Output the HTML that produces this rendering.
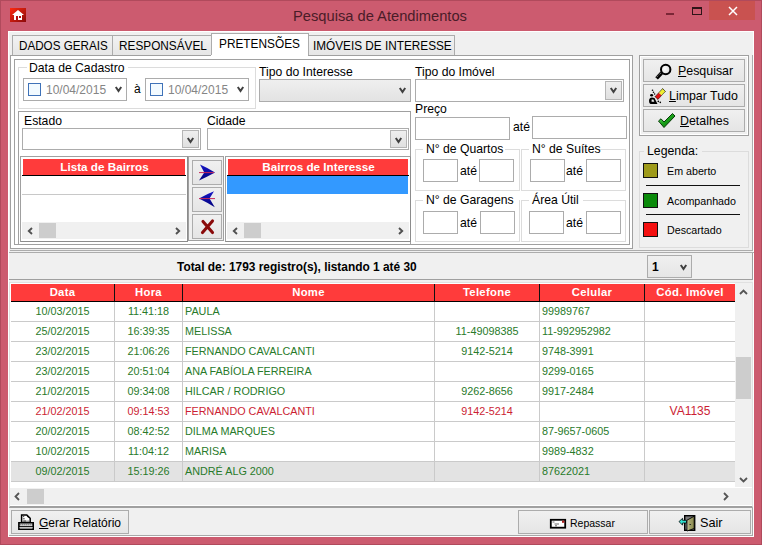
<!DOCTYPE html><html><head><meta charset="utf-8"><style>
*{margin:0;padding:0;box-sizing:border-box}
html,body{width:762px;height:545px;overflow:hidden}
body{position:relative;background:#CC5B6F;font-family:"Liberation Sans",sans-serif;font-size:12px;color:#000}
div,span,svg{position:absolute}
.t{white-space:nowrap;line-height:14px}
.edit{background:#fff;border:1px solid #ABADB3}
.btn{background:linear-gradient(#F0F0F0,#E5E5E5);border:1px solid #ACACAC}
.dd{background:linear-gradient(#F0F0F0,#E5E5E5);border:1px solid #ACACAC}
</style></head><body>
<div style="left:0px;top:0px;width:762px;height:545px;border:1px solid #B04A5C"></div>
<svg style="left:10px;top:8px" width="16" height="14" viewBox="0 0 16 14"><defs><linearGradient id="ig" x1="0" y1="0" x2="1" y2="1"><stop offset="0" stop-color="#FF2A10"/><stop offset="1" stop-color="#8A0A0A"/></linearGradient></defs><rect width="16" height="14" fill="url(#ig)"/><path d="M8 2 L14 7 L12 7 L12 12 L4 12 L4 7 L2 7 Z" fill="#fff"/><rect x="6" y="8" width="2" height="4" fill="#B01010"/><rect x="9" y="8" width="2" height="2" fill="#B01010"/></svg>
<div class="t" style="left:293px;top:7.5px;font-size:14.7px;color:#4A1C28;line-height:16px">Pesquisa de Atendimentos</div>
<div style="left:666px;top:13px;width:8px;height:2px;background:#7A2636"></div>
<div style="left:692px;top:7px;width:10px;height:8px;border:1px solid #2E1418;border-top-width:2px"></div>
<div style="left:709px;top:1px;width:46px;height:19px;background:#C95250"></div>
<svg style="left:728px;top:6px" width="10" height="10" viewBox="0 0 10 10"><path d="M1 1 L9 9 M9 1 L1 9" stroke="#fff" stroke-width="1.5"/></svg>
<div style="left:8px;top:31px;width:746px;height:506px;background:#F0F0F0;border:1px solid #fff"></div>
<div style="left:9px;top:508px;width:744px;height:28px;border-right:1px solid #A8A8A8;border-bottom:1px solid #A8A8A8"></div>
<div style="left:12px;top:35px;width:101px;height:21px;background:linear-gradient(#F2F2F2,#E6E6E6);border:1px solid #ACACAC"></div>
<div class="t" style="left:18.6px;top:38.5px;font-size:12.8px;transform:scaleX(0.91);transform-origin:0 0">DADOS GERAIS</div>
<div style="left:112px;top:35px;width:100px;height:21px;background:linear-gradient(#F2F2F2,#E6E6E6);border:1px solid #ACACAC"></div>
<div class="t" style="left:119px;top:38.5px;font-size:12.8px;transform:scaleX(0.922);transform-origin:0 0">RESPONSÁVEL</div>
<div style="left:308px;top:35px;width:147px;height:21px;background:linear-gradient(#F2F2F2,#E6E6E6);border:1px solid #ACACAC"></div>
<div class="t" style="left:313px;top:38.5px;font-size:12.8px;transform:scaleX(0.92);transform-origin:0 0">IMÓVEIS DE INTERESSE</div>
<div style="left:10px;top:250px;width:743px;height:1px;background:#ACACAC"></div>
<div style="left:752px;top:55px;width:1px;height:196px;background:#ACACAC"></div>
<div style="left:9px;top:252px;width:745px;height:1px;background:#ACACAC"></div>
<div style="left:211px;top:33px;width:98px;height:23px;background:#fff;border:1px solid #ACACAC;border-bottom:none"></div>
<div class="t" style="left:219px;top:36.5px;font-size:12.8px;transform:scaleX(0.926);transform-origin:0 0">PRETENSÕES</div>
<div style="left:10px;top:55px;width:623px;height:194px;background:#fff;border:1px solid #A0A0A0"></div>
<div style="left:211px;top:55px;width:97px;height:1px;background:#fff"></div>
<div style="left:14px;top:59px;width:616px;height:186px;background:#fff;border:1px solid #A0A0A0"></div>
<div style="left:18px;top:67px;width:238px;height:42px;border:1px solid #DCDCDC;border-right-color:#DCDCDC"></div>
<div style="left:27px;top:62px;width:101px;height:12px;background:#fff"></div>
<div class="t" style="left:29px;top:61px;font-size:12.2px">Data de Cadastro</div>
<div style="left:23px;top:78px;width:104px;height:23px;background:#fff;border:1px solid #ACACAC"></div>
<div style="left:28px;top:83px;width:13px;height:13px;background:#F2FAFF;border:1px solid #3F72B8"></div>
<div class="t" style="left:46px;top:83px;color:#858585;font-size:12px">10/04/2015</div>
<svg style="left:114px;top:86px" width="9" height="8" viewBox="0 0 9 8"><path d="M1.8 1 L4.5 5 L7.2 1" fill="none" stroke="#404040" stroke-width="2"/></svg>
<div style="left:145px;top:78px;width:104px;height:23px;background:#fff;border:1px solid #ACACAC"></div>
<div style="left:150px;top:83px;width:13px;height:13px;background:#F2FAFF;border:1px solid #3F72B8"></div>
<div class="t" style="left:168px;top:83px;color:#858585;font-size:12px">10/04/2015</div>
<svg style="left:236px;top:86px" width="9" height="8" viewBox="0 0 9 8"><path d="M1.8 1 L4.5 5 L7.2 1" fill="none" stroke="#404040" stroke-width="2"/></svg>
<div class="t" style="left:134px;top:82px;font-size:12px">à</div>
<div class="t" style="left:259px;top:65px;font-size:12.2px">Tipo do Interesse</div>
<div style="left:259px;top:79px;width:152px;height:23px;background:linear-gradient(#EFEFEF,#E3E3E3);border:1px solid #ACACAC"></div>
<svg style="left:398px;top:87px" width="9" height="8" viewBox="0 0 9 8"><path d="M1.8 1 L4.5 5 L7.2 1" fill="none" stroke="#404040" stroke-width="2"/></svg>
<div class="t" style="left:415px;top:65px;font-size:12.2px">Tipo do Imóvel</div>
<div style="left:415px;top:79px;width:209px;height:23px;background:#fff;border:1px solid #ACACAC"></div>
<div style="left:605px;top:81px;width:17px;height:19px;background:linear-gradient(#EFEFEF,#E0E0E0);border:1px solid #B5B5B5"></div>
<svg style="left:609px;top:87px" width="9" height="8" viewBox="0 0 9 8"><path d="M1.8 1 L4.5 5 L7.2 1" fill="none" stroke="#404040" stroke-width="2"/></svg>
<div class="t" style="left:415px;top:102px;font-size:12.2px">Preço</div>
<div style="left:415px;top:117px;width:95px;height:23px;background:#fff;border:1px solid #ACACAC"></div>
<div class="t" style="left:513px;top:120px;font-size:12.2px">até</div>
<div style="left:532px;top:116px;width:95px;height:23px;background:#fff;border:1px solid #ACACAC"></div>
<div style="left:18px;top:111px;width:393px;height:134px;border:1px solid #A0A0A0"></div>
<div class="t" style="left:24px;top:114px;font-size:12.2px">Estado</div>
<div style="left:22px;top:128px;width:179px;height:22px;background:#fff;border:1px solid #ACACAC"></div>
<div style="left:182px;top:130px;width:17px;height:18px;background:linear-gradient(#EFEFEF,#E0E0E0);border:1px solid #B5B5B5"></div>
<svg style="left:186px;top:136.5px" width="9" height="8" viewBox="0 0 9 8"><path d="M1.8 1 L4.5 5 L7.2 1" fill="none" stroke="#404040" stroke-width="2"/></svg>
<div class="t" style="left:207px;top:114px;font-size:12.2px">Cidade</div>
<div style="left:207px;top:128px;width:202px;height:22px;background:#fff;border:1px solid #ACACAC"></div>
<div style="left:390px;top:130px;width:17px;height:18px;background:linear-gradient(#EFEFEF,#E0E0E0);border:1px solid #B5B5B5"></div>
<svg style="left:394px;top:136.5px" width="9" height="8" viewBox="0 0 9 8"><path d="M1.8 1 L4.5 5 L7.2 1" fill="none" stroke="#404040" stroke-width="2"/></svg>
<div style="left:20px;top:156px;width:168px;height:86px;background:#fff;border:1px solid #A0A0A0;border-right-color:#8C8C8C;border-bottom-color:#8C8C8C"></div>
<div style="left:23px;top:159px;width:162px;height:16px;background:#FF3B3B"></div>
<div style="left:22px;top:175px;width:164px;height:1px;background:#000"></div>
<div class="t" style="left:23px;top:159px;width:163px;text-align:center;color:#fff;font-weight:bold;font-size:11.7px;line-height:15px">Lista de Bairros</div>
<div style="left:22px;top:194px;width:164px;height:1px;background:#C8C8C8"></div>
<div style="left:22px;top:222px;width:164px;height:17px;background:#F0F0F0"></div>
<div style="left:39px;top:223px;width:17px;height:15px;background:#CDCDCD"></div>
<svg style="left:27px;top:226.5px" width="6" height="8" viewBox="0 0 6 8"><path d="M5 1 L1.8 4 L5 7" fill="none" stroke="#505050" stroke-width="1.9"/></svg>
<svg style="left:175px;top:226.5px" width="6" height="8" viewBox="0 0 6 8"><path d="M1 1 L4.2 4 L1 7" fill="none" stroke="#505050" stroke-width="1.9"/></svg>
<div style="left:225px;top:156px;width:186px;height:86px;background:#fff;border:1px solid #A0A0A0;border-right-color:#8C8C8C;border-bottom-color:#8C8C8C"></div>
<div style="left:228px;top:159px;width:180px;height:16px;background:#FF3B3B"></div>
<div style="left:227px;top:175px;width:182px;height:1px;background:#000"></div>
<div class="t" style="left:228px;top:159px;width:181px;text-align:center;color:#fff;font-weight:bold;font-size:11.7px;line-height:15px">Bairros de Interesse</div>
<div style="left:227px;top:176px;width:181px;height:18px;background:#3399FF"></div>
<div style="left:227px;top:222px;width:182px;height:17px;background:#F0F0F0"></div>
<div style="left:244px;top:223px;width:17px;height:15px;background:#CDCDCD"></div>
<svg style="left:232px;top:226.5px" width="6" height="8" viewBox="0 0 6 8"><path d="M5 1 L1.8 4 L5 7" fill="none" stroke="#505050" stroke-width="1.9"/></svg>
<svg style="left:398px;top:226.5px" width="6" height="8" viewBox="0 0 6 8"><path d="M1 1 L4.2 4 L1 7" fill="none" stroke="#505050" stroke-width="1.9"/></svg>
<div style="left:188px;top:156px;width:36px;height:85px;background:#F0F0F0;border:1px solid #A0A0A0"></div>
<div style="left:192px;top:160px;width:30px;height:25px;background:linear-gradient(#F0F0F0,#E5E5E5);border:1px solid #ACACAC"></div>
<div style="left:192px;top:187px;width:30px;height:25px;background:linear-gradient(#F0F0F0,#E5E5E5);border:1px solid #ACACAC"></div>
<div style="left:192px;top:214px;width:30px;height:25px;background:linear-gradient(#F0F0F0,#E5E5E5);border:1px solid #ACACAC"></div>
<svg style="left:198px;top:164px" width="18" height="17" viewBox="0 0 18 17"><defs><linearGradient id="ab" x1="0" y1="0" x2="0" y2="1"><stop offset="0" stop-color="#1818C8"/><stop offset="1" stop-color="#00007A"/></linearGradient></defs><path d="M2 0.5 Q9 3.5 17 8.6 Q9 13 1 16.5 L6.3 8.6 Z" fill="url(#ab)"/><path d="M1 8.6 L16 8.6" stroke="#C8285A" stroke-width="1"/></svg>
<svg style="left:198px;top:191px" width="18" height="17" viewBox="0 0 18 17"><path d="M16 0.3 Q9 3 1 7.6 Q9 11.5 16.8 16.3 L11.5 7.6 Z" fill="url(#ab)"/><path d="M1 7.6 L17 7.6" stroke="#C8285A" stroke-width="1"/></svg>
<svg style="left:199px;top:218px" width="17" height="17" viewBox="0 0 17 17"><path d="M4 3.5 L13.5 14.5 M13.5 3 L3.5 14.5" stroke="#8A0A0A" stroke-width="3.1" stroke-linecap="round"/></svg>
<div style="left:415px;top:149px;width:105px;height:42px;border:1px solid #DCDCDC"></div>
<div style="left:423px;top:143px;width:82px;height:12px;background:#fff"></div>
<div class="t" style="left:426px;top:142px;font-size:12.2px">N° de Quartos</div>
<div style="left:521px;top:149px;width:105px;height:42px;border:1px solid #DCDCDC"></div>
<div style="left:529px;top:143px;width:70px;height:12px;background:#fff"></div>
<div class="t" style="left:532px;top:142px;font-size:12.2px">N° de Suítes</div>
<div style="left:415px;top:200px;width:105px;height:42px;border:1px solid #DCDCDC"></div>
<div style="left:423px;top:194px;width:96px;height:12px;background:#fff"></div>
<div class="t" style="left:426px;top:193px;font-size:12.2px">N° de Garagens</div>
<div style="left:521px;top:200px;width:105px;height:42px;border:1px solid #DCDCDC"></div>
<div style="left:529px;top:194px;width:54px;height:12px;background:#fff"></div>
<div class="t" style="left:532px;top:193px;font-size:12.2px">Área Útil</div>
<div style="left:423px;top:159px;width:35px;height:23px;background:#fff;border:1px solid #ACACAC"></div>
<div class="t" style="left:460px;top:164px;font-size:12.2px">até</div>
<div style="left:479px;top:159px;width:35px;height:23px;background:#fff;border:1px solid #ACACAC"></div>
<div style="left:530px;top:159px;width:35px;height:23px;background:#fff;border:1px solid #ACACAC"></div>
<div class="t" style="left:566px;top:164px;font-size:12.2px">até</div>
<div style="left:586px;top:159px;width:35px;height:23px;background:#fff;border:1px solid #ACACAC"></div>
<div style="left:423px;top:211px;width:35px;height:23px;background:#fff;border:1px solid #ACACAC"></div>
<div class="t" style="left:460px;top:216px;font-size:12.2px">até</div>
<div style="left:480px;top:211px;width:35px;height:23px;background:#fff;border:1px solid #ACACAC"></div>
<div style="left:529px;top:211px;width:35px;height:23px;background:#fff;border:1px solid #ACACAC"></div>
<div class="t" style="left:566px;top:216px;font-size:12.2px">até</div>
<div style="left:586px;top:211px;width:35px;height:23px;background:#fff;border:1px solid #ACACAC"></div>
<div style="left:639px;top:55px;width:110px;height:81px;border:1px solid #A0A0A0"></div>
<div style="left:640px;top:56px;width:108px;height:79px;border:1px solid #fff"></div>
<div style="left:643px;top:59px;width:102px;height:23px;background:linear-gradient(#F0F0F0,#E5E5E5);border:1px solid #ACACAC"></div>
<div class="t" style="left:678px;top:64px;font-size:12.4px"><u>P</u>esquisar</div>
<div style="left:643px;top:84px;width:102px;height:23px;background:linear-gradient(#F0F0F0,#E5E5E5);border:1px solid #ACACAC"></div>
<div class="t" style="left:669px;top:89px;font-size:12.4px"><u>L</u>impar Tudo</div>
<div style="left:643px;top:109px;width:102px;height:23px;background:linear-gradient(#F0F0F0,#E5E5E5);border:1px solid #ACACAC"></div>
<div class="t" style="left:680px;top:114px;font-size:12.4px"><u>D</u>etalhes</div>
<svg style="left:654px;top:62px" width="20" height="19" viewBox="0 0 20 19"><defs><radialGradient id="lg" cx="0.4" cy="0.4" r="0.7"><stop offset="0" stop-color="#FFFFFF"/><stop offset="1" stop-color="#D8D8D8"/></radialGradient></defs><circle cx="11.7" cy="7.5" r="4.7" fill="url(#lg)" stroke="#000" stroke-width="2"/><path d="M7.6 11 L2.6 16.4" stroke="#000" stroke-width="3.6"/><path d="M6.6 11.2 L2.2 15.6" stroke="#fff" stroke-width="0.7" stroke-dasharray="1 1"/></svg>
<svg style="left:648px;top:87px" width="18" height="18" viewBox="0 0 18 18"><g transform="rotate(-46.8 12.25 7)"><rect x="6.75" y="5" width="5.5" height="4" fill="#E01010"/><rect x="12.25" y="5" width="5.5" height="4" fill="#EEEE30"/><rect x="6.75" y="5" width="11" height="4" fill="none" stroke="#000" stroke-width="0.9" stroke-dasharray="0.9 0.6"/></g><path d="M1 14 Q1 10.5 4 10.5 L6.5 11 L9.5 17 L2.5 17 Q1 16.5 1 14 Z M3.6 12.4 L3.6 14.8 L6.3 14.8 L5.4 12.4 Z" fill="#000" fill-rule="evenodd"/><ellipse cx="3.6" cy="8.2" rx="1.5" ry="1.2" fill="#000"/><circle cx="4.5" cy="3.3" r="0.8" fill="#000"/><circle cx="5.5" cy="5.3" r="0.8" fill="#000"/><circle cx="6.6" cy="7" r="0.8" fill="#000"/><circle cx="10.3" cy="14.4" r="0.8" fill="#000"/><circle cx="12.3" cy="15.4" r="0.8" fill="#000"/></svg>
<svg style="left:656px;top:111px" width="21" height="19" viewBox="0 0 21 19"><defs><linearGradient id="cg" x1="0" y1="0" x2="1" y2="1"><stop offset="0" stop-color="#7CF07C"/><stop offset="0.5" stop-color="#18A018"/><stop offset="1" stop-color="#0A600A"/></linearGradient></defs><path d="M2.5 10 L5 7.8 L8 11 L16.5 2.5 L19 5 L8 16.5 Z" fill="url(#cg)" stroke="#063A06" stroke-width="1"/></svg>
<div style="left:639px;top:151px;width:110px;height:97px;border:1px solid #DCDCDC"></div>
<div style="left:644px;top:145px;width:58px;height:12px;background:#F0F0F0"></div>
<div class="t" style="left:647px;top:143.5px;font-size:12.3px">Legenda:</div>
<div style="left:643px;top:163px;width:15px;height:15px;background:#9E9A1A;border:1px solid #111"></div>
<div class="t" style="left:667px;top:164px;font-size:10.7px">Em aberto</div>
<div style="left:643px;top:193px;width:15px;height:15px;background:#0A8A0A;border:1px solid #111"></div>
<div class="t" style="left:667px;top:194px;font-size:10.7px">Acompanhado</div>
<div style="left:643px;top:222px;width:15px;height:15px;background:#F41010;border:1px solid #111"></div>
<div class="t" style="left:667px;top:223px;font-size:10.7px">Descartado</div>
<div style="left:646px;top:185px;width:94px;height:1px;background:#111"></div>
<div style="left:646px;top:214px;width:94px;height:1px;background:#111"></div>
<div style="left:9px;top:253px;width:744px;height:27px;border-bottom:1px solid #A0A0A0;border-right:1px solid #A0A0A0"></div>
<div class="t" style="left:177px;top:260px;font-size:11.9px"><b>Total de: 1793 registro(s), listando 1 até 30</b></div>
<div style="left:647px;top:255px;width:45px;height:23px;background:linear-gradient(#F0F0F0,#E5E5E5);border:1px solid #ACACAC"></div>
<div class="t" style="left:652px;top:260px;font-size:12px"><b>1</b></div>
<svg style="left:679px;top:264px" width="9" height="8" viewBox="0 0 9 8"><path d="M1.8 1 L4.5 5 L7.2 1" fill="none" stroke="#404040" stroke-width="2"/></svg>
<div style="left:9px;top:282px;width:744px;height:226px;background:#fff;border:1px solid #E0E0E0;border-bottom:2px solid #A0A0A0"></div>
<div style="left:11px;top:284px;width:103px;height:17px;background:#FF3B3B"></div>
<div class="t" style="left:11px;top:284px;width:103px;text-align:center;color:#fff;font-weight:bold;font-size:11.3px;letter-spacing:0.3px;line-height:16px">Data</div>
<div style="left:114px;top:284px;width:1px;height:18px;background:#111"></div>
<div style="left:115px;top:284px;width:67px;height:17px;background:#FF3B3B"></div>
<div class="t" style="left:115px;top:284px;width:67px;text-align:center;color:#fff;font-weight:bold;font-size:11.3px;letter-spacing:0.3px;line-height:16px">Hora</div>
<div style="left:182px;top:284px;width:1px;height:18px;background:#111"></div>
<div style="left:183px;top:284px;width:251px;height:17px;background:#FF3B3B"></div>
<div class="t" style="left:183px;top:284px;width:251px;text-align:center;color:#fff;font-weight:bold;font-size:11.3px;letter-spacing:0.3px;line-height:16px">Nome</div>
<div style="left:434px;top:284px;width:1px;height:18px;background:#111"></div>
<div style="left:435px;top:284px;width:104px;height:17px;background:#FF3B3B"></div>
<div class="t" style="left:435px;top:284px;width:104px;text-align:center;color:#fff;font-weight:bold;font-size:11.3px;letter-spacing:0.3px;line-height:16px">Telefone</div>
<div style="left:539px;top:284px;width:1px;height:18px;background:#111"></div>
<div style="left:540px;top:284px;width:104px;height:17px;background:#FF3B3B"></div>
<div class="t" style="left:540px;top:284px;width:104px;text-align:center;color:#fff;font-weight:bold;font-size:11.3px;letter-spacing:0.3px;line-height:16px">Celular</div>
<div style="left:644px;top:284px;width:1px;height:18px;background:#111"></div>
<div style="left:645px;top:284px;width:90px;height:17px;background:#FF3B3B"></div>
<div class="t" style="left:645px;top:284px;width:90px;text-align:center;color:#fff;font-weight:bold;font-size:11.3px;letter-spacing:0.3px;line-height:16px">Cód. Imóvel</div>
<div style="left:735px;top:284px;width:1px;height:18px;background:#111"></div>
<div style="left:11px;top:301px;width:724px;height:1px;background:#000"></div>
<div style="left:11px;top:321px;width:724px;height:1px;background:#CACACA"></div>
<div class="t" style="left:11px;top:304px;width:103px;text-align:center;color:#287A2A;font-size:10.8px">10/03/2015</div>
<div class="t" style="left:115px;top:304px;width:67px;text-align:center;color:#287A2A;font-size:10.8px">11:41:18</div>
<div class="t" style="left:185px;top:304px;color:#287A2A;font-size:10.8px">PAULA</div>
<div class="t" style="left:542px;top:304px;color:#287A2A;font-size:10.8px">99989767</div>
<div style="left:114px;top:302px;width:1px;height:20px;background:#CACACA"></div>
<div style="left:182px;top:302px;width:1px;height:20px;background:#CACACA"></div>
<div style="left:434px;top:302px;width:1px;height:20px;background:#CACACA"></div>
<div style="left:539px;top:302px;width:1px;height:20px;background:#CACACA"></div>
<div style="left:644px;top:302px;width:1px;height:20px;background:#CACACA"></div>
<div style="left:735px;top:302px;width:1px;height:20px;background:#CACACA"></div>
<div style="left:11px;top:341px;width:724px;height:1px;background:#CACACA"></div>
<div class="t" style="left:11px;top:324px;width:103px;text-align:center;color:#287A2A;font-size:10.8px">25/02/2015</div>
<div class="t" style="left:115px;top:324px;width:67px;text-align:center;color:#287A2A;font-size:10.8px">16:39:35</div>
<div class="t" style="left:185px;top:324px;color:#287A2A;font-size:10.8px">MELISSA</div>
<div class="t" style="left:435px;top:324px;width:104px;text-align:center;color:#287A2A;font-size:10.8px">11-49098385</div>
<div class="t" style="left:542px;top:324px;color:#287A2A;font-size:10.8px">11-992952982</div>
<div style="left:114px;top:322px;width:1px;height:20px;background:#CACACA"></div>
<div style="left:182px;top:322px;width:1px;height:20px;background:#CACACA"></div>
<div style="left:434px;top:322px;width:1px;height:20px;background:#CACACA"></div>
<div style="left:539px;top:322px;width:1px;height:20px;background:#CACACA"></div>
<div style="left:644px;top:322px;width:1px;height:20px;background:#CACACA"></div>
<div style="left:735px;top:322px;width:1px;height:20px;background:#CACACA"></div>
<div style="left:11px;top:361px;width:724px;height:1px;background:#CACACA"></div>
<div class="t" style="left:11px;top:344px;width:103px;text-align:center;color:#287A2A;font-size:10.8px">23/02/2015</div>
<div class="t" style="left:115px;top:344px;width:67px;text-align:center;color:#287A2A;font-size:10.8px">21:06:26</div>
<div class="t" style="left:185px;top:344px;color:#287A2A;font-size:10.8px">FERNANDO CAVALCANTI</div>
<div class="t" style="left:435px;top:344px;width:104px;text-align:center;color:#287A2A;font-size:10.8px">9142-5214</div>
<div class="t" style="left:542px;top:344px;color:#287A2A;font-size:10.8px">9748-3991</div>
<div style="left:114px;top:342px;width:1px;height:20px;background:#CACACA"></div>
<div style="left:182px;top:342px;width:1px;height:20px;background:#CACACA"></div>
<div style="left:434px;top:342px;width:1px;height:20px;background:#CACACA"></div>
<div style="left:539px;top:342px;width:1px;height:20px;background:#CACACA"></div>
<div style="left:644px;top:342px;width:1px;height:20px;background:#CACACA"></div>
<div style="left:735px;top:342px;width:1px;height:20px;background:#CACACA"></div>
<div style="left:11px;top:381px;width:724px;height:1px;background:#CACACA"></div>
<div class="t" style="left:11px;top:364px;width:103px;text-align:center;color:#287A2A;font-size:10.8px">23/02/2015</div>
<div class="t" style="left:115px;top:364px;width:67px;text-align:center;color:#287A2A;font-size:10.8px">20:51:04</div>
<div class="t" style="left:185px;top:364px;color:#287A2A;font-size:10.8px">ANA FABÍOLA FERREIRA</div>
<div class="t" style="left:542px;top:364px;color:#287A2A;font-size:10.8px">9299-0165</div>
<div style="left:114px;top:362px;width:1px;height:20px;background:#CACACA"></div>
<div style="left:182px;top:362px;width:1px;height:20px;background:#CACACA"></div>
<div style="left:434px;top:362px;width:1px;height:20px;background:#CACACA"></div>
<div style="left:539px;top:362px;width:1px;height:20px;background:#CACACA"></div>
<div style="left:644px;top:362px;width:1px;height:20px;background:#CACACA"></div>
<div style="left:735px;top:362px;width:1px;height:20px;background:#CACACA"></div>
<div style="left:11px;top:401px;width:724px;height:1px;background:#CACACA"></div>
<div class="t" style="left:11px;top:384px;width:103px;text-align:center;color:#287A2A;font-size:10.8px">21/02/2015</div>
<div class="t" style="left:115px;top:384px;width:67px;text-align:center;color:#287A2A;font-size:10.8px">09:34:08</div>
<div class="t" style="left:185px;top:384px;color:#287A2A;font-size:10.8px">HILCAR / RODRIGO</div>
<div class="t" style="left:435px;top:384px;width:104px;text-align:center;color:#287A2A;font-size:10.8px">9262-8656</div>
<div class="t" style="left:542px;top:384px;color:#287A2A;font-size:10.8px">9917-2484</div>
<div style="left:114px;top:382px;width:1px;height:20px;background:#CACACA"></div>
<div style="left:182px;top:382px;width:1px;height:20px;background:#CACACA"></div>
<div style="left:434px;top:382px;width:1px;height:20px;background:#CACACA"></div>
<div style="left:539px;top:382px;width:1px;height:20px;background:#CACACA"></div>
<div style="left:644px;top:382px;width:1px;height:20px;background:#CACACA"></div>
<div style="left:735px;top:382px;width:1px;height:20px;background:#CACACA"></div>
<div style="left:11px;top:421px;width:724px;height:1px;background:#CACACA"></div>
<div class="t" style="left:11px;top:404px;width:103px;text-align:center;color:#CC1E34;font-size:10.8px">21/02/2015</div>
<div class="t" style="left:115px;top:404px;width:67px;text-align:center;color:#CC1E34;font-size:10.8px">09:14:53</div>
<div class="t" style="left:185px;top:404px;color:#CC1E34;font-size:10.8px">FERNANDO CAVALCANTI</div>
<div class="t" style="left:435px;top:404px;width:104px;text-align:center;color:#CC1E34;font-size:10.8px">9142-5214</div>
<div class="t" style="left:645px;top:404px;width:90px;text-align:center;color:#CC1E34;font-size:12px">VA1135</div>
<div style="left:114px;top:402px;width:1px;height:20px;background:#CACACA"></div>
<div style="left:182px;top:402px;width:1px;height:20px;background:#CACACA"></div>
<div style="left:434px;top:402px;width:1px;height:20px;background:#CACACA"></div>
<div style="left:539px;top:402px;width:1px;height:20px;background:#CACACA"></div>
<div style="left:644px;top:402px;width:1px;height:20px;background:#CACACA"></div>
<div style="left:735px;top:402px;width:1px;height:20px;background:#CACACA"></div>
<div style="left:11px;top:441px;width:724px;height:1px;background:#CACACA"></div>
<div class="t" style="left:11px;top:424px;width:103px;text-align:center;color:#287A2A;font-size:10.8px">20/02/2015</div>
<div class="t" style="left:115px;top:424px;width:67px;text-align:center;color:#287A2A;font-size:10.8px">08:42:52</div>
<div class="t" style="left:185px;top:424px;color:#287A2A;font-size:10.8px">DILMA MARQUES</div>
<div class="t" style="left:542px;top:424px;color:#287A2A;font-size:10.8px">87-9657-0605</div>
<div style="left:114px;top:422px;width:1px;height:20px;background:#CACACA"></div>
<div style="left:182px;top:422px;width:1px;height:20px;background:#CACACA"></div>
<div style="left:434px;top:422px;width:1px;height:20px;background:#CACACA"></div>
<div style="left:539px;top:422px;width:1px;height:20px;background:#CACACA"></div>
<div style="left:644px;top:422px;width:1px;height:20px;background:#CACACA"></div>
<div style="left:735px;top:422px;width:1px;height:20px;background:#CACACA"></div>
<div style="left:11px;top:461px;width:724px;height:1px;background:#CACACA"></div>
<div class="t" style="left:11px;top:444px;width:103px;text-align:center;color:#287A2A;font-size:10.8px">10/02/2015</div>
<div class="t" style="left:115px;top:444px;width:67px;text-align:center;color:#287A2A;font-size:10.8px">11:04:12</div>
<div class="t" style="left:185px;top:444px;color:#287A2A;font-size:10.8px">MARISA</div>
<div class="t" style="left:542px;top:444px;color:#287A2A;font-size:10.8px">9989-4832</div>
<div style="left:114px;top:442px;width:1px;height:20px;background:#CACACA"></div>
<div style="left:182px;top:442px;width:1px;height:20px;background:#CACACA"></div>
<div style="left:434px;top:442px;width:1px;height:20px;background:#CACACA"></div>
<div style="left:539px;top:442px;width:1px;height:20px;background:#CACACA"></div>
<div style="left:644px;top:442px;width:1px;height:20px;background:#CACACA"></div>
<div style="left:735px;top:442px;width:1px;height:20px;background:#CACACA"></div>
<div style="left:11px;top:462px;width:724px;height:19px;background:#E3E3E3"></div>
<div style="left:11px;top:481px;width:724px;height:1px;background:#CACACA"></div>
<div class="t" style="left:11px;top:464px;width:103px;text-align:center;color:#287A2A;font-size:10.8px">09/02/2015</div>
<div class="t" style="left:115px;top:464px;width:67px;text-align:center;color:#287A2A;font-size:10.8px">15:19:26</div>
<div class="t" style="left:185px;top:464px;color:#287A2A;font-size:10.8px">ANDRÉ ALG 2000</div>
<div class="t" style="left:542px;top:464px;color:#287A2A;font-size:10.8px">87622021</div>
<div style="left:114px;top:462px;width:1px;height:20px;background:#CACACA"></div>
<div style="left:182px;top:462px;width:1px;height:20px;background:#CACACA"></div>
<div style="left:434px;top:462px;width:1px;height:20px;background:#CACACA"></div>
<div style="left:539px;top:462px;width:1px;height:20px;background:#CACACA"></div>
<div style="left:644px;top:462px;width:1px;height:20px;background:#CACACA"></div>
<div style="left:735px;top:462px;width:1px;height:20px;background:#CACACA"></div>
<div style="left:735px;top:283px;width:17px;height:204px;background:#F0F0F0"></div>
<div style="left:736px;top:357px;width:15px;height:42px;background:#CDCDCD"></div>
<svg style="left:739px;top:289px" width="9" height="6" viewBox="0 0 9 6"><path d="M1 5 L4.5 1.5 L8 5" fill="none" stroke="#555" stroke-width="1.8"/></svg>
<svg style="left:739px;top:477px" width="9" height="6" viewBox="0 0 9 6"><path d="M1 1 L4.5 4.5 L8 1" fill="none" stroke="#555" stroke-width="1.8"/></svg>
<div style="left:10px;top:488px;width:742px;height:17px;background:#F0F0F0"></div>
<div style="left:27px;top:489px;width:17px;height:15px;background:#CDCDCD"></div>
<svg style="left:14px;top:492px" width="6" height="9" viewBox="0 0 6 9"><path d="M5 1 L1.5 4.5 L5 8" fill="none" stroke="#555" stroke-width="1.8"/></svg>
<svg style="left:723px;top:492px" width="6" height="9" viewBox="0 0 6 9"><path d="M1 1 L4.5 4.5 L1 8" fill="none" stroke="#555" stroke-width="1.8"/></svg>
<div style="left:11px;top:510px;width:118px;height:24px;background:linear-gradient(#F0F0F0,#E5E5E5);border:1px solid #ACACAC"></div>
<div class="t" style="left:39px;top:516px;font-size:12px"><u>G</u>erar Relatório</div>
<svg style="left:17px;top:513px" width="18" height="18" viewBox="0 0 18 18"><path d="M4.6 1.9 L9.8 1.9 L13.2 5.3 L13.2 9.5 L4.6 9.5 Z" fill="#fff" stroke="#000" stroke-width="1.5"/><path d="M6.2 3.6 L7.2 3.6 M6.2 5.8 L7.6 5.8 M6.2 8 L9.4 8 M10.6 8 L11.5 8 M10.2 3.2 L11.4 4.6" stroke="#000" stroke-width="0.9"/><rect x="1.9" y="9.8" width="14.3" height="6.4" fill="#fff" stroke="#000" stroke-width="1.6"/><path d="M2.6 11.8 L15.6 11.8" stroke="#000" stroke-width="1.1" stroke-dasharray="1 1"/><path d="M2 13.4 L16 13.4" stroke="#000" stroke-width="1"/><rect x="2.7" y="14" width="12.7" height="1.4" fill="#C4C4C4"/></svg>
<div style="left:518px;top:510px;width:130px;height:24px;background:linear-gradient(#F0F0F0,#E5E5E5);border:1px solid #ACACAC"></div>
<div class="t" style="left:570px;top:516px;font-size:10.5px">Repassar</div>
<svg style="left:549px;top:518px" width="18" height="11" viewBox="0 0 18 11"><rect x="1.8" y="1.8" width="14.4" height="7.9" fill="#fff" stroke="#000" stroke-width="1.8"/><path d="M3.5 4 L5.5 4 M5.5 6 L10 6 M6 7.8 L8 7.8" stroke="#444" stroke-width="0.8"/><rect x="13" y="2.6" width="2.4" height="2.2" fill="#B02020"/></svg>
<div style="left:649px;top:510px;width:102px;height:24px;background:linear-gradient(#F0F0F0,#E5E5E5);border:1px solid #ACACAC"></div>
<div class="t" style="left:700px;top:516px;font-size:12.7px">Sair</div>
<svg style="left:678px;top:514px" width="19" height="18" viewBox="0 0 19 18"><defs><linearGradient id="dg" x1="0" y1="0" x2="1" y2="0"><stop offset="0" stop-color="#E8E8C8"/><stop offset="0.25" stop-color="#A8A870"/><stop offset="1" stop-color="#8A8A50"/></linearGradient></defs><rect x="6.7" y="1.7" width="10" height="14.6" fill="#7A7A7A" stroke="#000" stroke-width="1.4"/><path d="M9 6.2 L16.2 2.2 L16.2 14.5 L9 17 Z" fill="url(#dg)" stroke="#000" stroke-width="0.9"/><rect x="11.5" y="10" width="1.5" height="0.9" fill="#222"/><path d="M1 7.6 L4.6 4.3 L4.6 6.3 L8.5 6.3 L8.5 9 L4.6 9 L4.6 11.2 Z" fill="#30E0D0" stroke="#000" stroke-width="0.8"/></svg>
</body></html>
